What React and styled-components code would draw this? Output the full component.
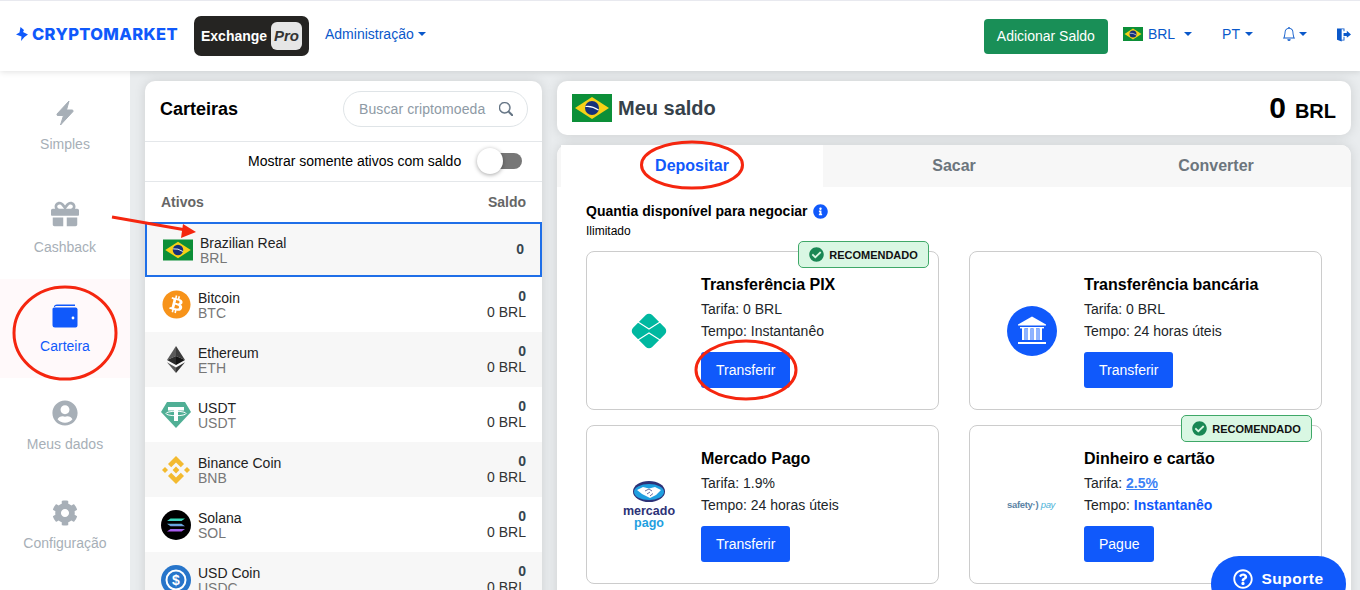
import React from "react";
import styled, { createGlobalStyle } from "styled-components";
import { FaGift, FaUserCircle, FaCog, FaBitcoin, FaCheckCircle, FaInfoCircle, FaRegQuestionCircle } from "react-icons/fa";
import { BsBell, BsSearch } from "react-icons/bs";

const BLUE = "#1059fb";
const LINK = "#0a58ca";

const Global = createGlobalStyle`
  html, body { margin: 0; padding: 0; background: #e9ecee; }
  body { font-family: "Liberation Sans", Arial, sans-serif; font-size: 14px; color: #212529; }
  * { box-sizing: border-box; }
`;

const Page = styled.div`
  position: relative;
  width: 1360px;
  height: 590px;
  overflow: hidden;
  display: flex;
  flex-direction: column;
  background: #e9ecee;
`;

const Header = styled.header`
  position: relative;
  z-index: 2;
  flex: 0 0 71px;
  display: flex;
  align-items: center;
  padding: 0 9px 0 16px;
  background: #fff;
  border-top: 1px solid #e8e9ef;
  box-shadow: 0 1px 6px rgba(0, 0, 0, 0.12);
`;

const Logo = styled.div`
  display: flex;
  align-items: center;
  gap: 4px;
  width: 178px;
  margin-top: -4px;
  color: ${BLUE};
  font-family: Inter, sans-serif;
  font-weight: 800;
  font-size: 16.5px;
  letter-spacing: 0.35px;
`;

const ExchangeBadge = styled.div`
  width: 115px;
  height: 40px;
  margin-top: -1px;
  padding: 0 7px;
  display: flex;
  align-items: center;
  justify-content: space-between;
  background: #252422;
  border-radius: 7px;
  color: #fff;
  font-weight: 700;
  font-size: 14px;
`;

const ProTag = styled.span`
  width: 31px;
  height: 28px;
  display: flex;
  align-items: center;
  justify-content: center;
  background: #e6e6e6;
  border-radius: 6px;
  color: #333;
  font-style: italic;
  font-size: 15px;
`;

const Caret = styled.i`
  display: inline-block;
  width: 0;
  height: 0;
  margin-left: ${(p) => p.$gap ?? 4}px;
  border-top: 4px solid ${LINK};
  border-left: 4px solid transparent;
  border-right: 4px solid transparent;
  vertical-align: 2px;
`;

const NavLink = styled.div`
  display: flex;
  align-items: center;
  margin-left: ${(p) => p.$left}px;
  margin-top: -4px;
  color: ${LINK};
  font-size: 14px;
`;

const FlagLabel = styled.span`
  margin-left: 5px;
`;

const AddButton = styled.div`
  margin-left: auto;
  width: 124px;
  height: 35px;
  display: flex;
  align-items: center;
  justify-content: center;
  background: #198f57;
  border-radius: 4px;
  color: #fff;
  font-size: 14px;
`;

const Body = styled.div`
  flex: 1;
  display: flex;
  min-height: 0;
`;

const Sidebar = styled.nav`
  flex: 0 0 130px;
  padding-top: 8px;
  background: #fff;
`;

const SideItem = styled.div`
  height: ${(p) => p.$h ?? 99}px;
  padding-top: ${(p) => p.$top ?? 23}px;
  display: flex;
  flex-direction: column;
  align-items: center;
  background: ${(p) => (p.$active ? "#fff9fa" : "transparent")};
  color: ${(p) => (p.$active ? BLUE : "#a7afb7")};
  font-size: 14px;
`;

const SideIcon = styled.div`
  height: 28px;
  display: flex;
  align-items: center;
  justify-content: center;
  margin-bottom: ${(p) => p.$gap ?? 9}px;
`;

const Content = styled.main`
  flex: 1;
  display: flex;
  gap: 15px;
  padding: 10px 9px 0 15px;
  min-width: 0;
`;

const Wallet = styled.section`
  flex: 0 0 397px;
  height: 560px;
  background: #fff;
  border-radius: 10px 10px 0 0;
  box-shadow: 0 0 12px rgba(0, 0, 0, 0.12);
`;

const WalletHead = styled.div`
  height: 60px;
  padding: 0 14px 4px 15px;
  display: flex;
  align-items: center;
  justify-content: space-between;
`;

const WalletTitle = styled.h2`
  margin: 0;
  font-size: 18px;
  font-weight: 700;
  color: #000;
`;

const Search = styled.div`
  width: 185px;
  height: 36px;
  padding: 0 14px 0 15px;
  display: flex;
  align-items: center;
  justify-content: space-between;
  border: 1px solid #dfe4e7;
  border-radius: 18px;
  color: #8e9aa5;
  font-size: 14px;
  letter-spacing: 0.1px;
  svg { color: #5f7080; stroke: currentColor; stroke-width: 0.6; }
`;

const FilterRow = styled.div`
  height: 41px;
  padding: 0 0 2px 103px;
  display: flex;
  align-items: center;
  border-top: 1px solid #e4e7ea;
  border-bottom: 1px solid #e4e7ea;
  color: #000;
  font-size: 14px;
`;

const ToggleTrack = styled.div`
  position: relative;
  width: 38px;
  height: 16px;
  margin-left: 23px;
  background: #777;
  border-radius: 8px;
`;

const ToggleKnob = styled.div`
  position: absolute;
  left: -7px;
  top: -5px;
  width: 26px;
  height: 26px;
  background: #fff;
  border-radius: 50%;
  box-shadow: 0 1px 4px rgba(0, 0, 0, 0.35);
`;

const ColumnHead = styled.div`
  height: 40px;
  padding: 0 16px;
  display: flex;
  align-items: center;
  justify-content: space-between;
  color: #666;
  font-size: 14px;
  font-weight: 700;
`;

const AssetRow = styled.div`
  height: 55px;
  padding: 0 16px;
  display: flex;
  align-items: center;
  background: ${(p) => (p.$shade ? "#f7f7f7" : "#fff")};
  border: ${(p) => (p.$selected ? "2px solid #1f6fe8" : "none")};
`;

const AssetIcon = styled.div`
  flex: 0 0 30px;
  height: 30px;
  display: flex;
  align-items: center;
  justify-content: center;
`;

const AssetName = styled.div`
  flex: 1;
  margin-left: 7px;
  padding-top: 2px;
  line-height: 15px;
  color: #222;
  font-size: 14px;
  span { display: block; color: #777; }
`;

const AssetValue = styled.div`
  padding-bottom: 2px;
  text-align: right;
  line-height: 16px;
  color: #333;
  font-size: 14px;
  b { display: block; color: #36454f; }
`;

const RightColumn = styled.div`
  flex: 0 0 794px;
  display: flex;
  flex-direction: column;
  gap: 10px;
`;

const BalanceCard = styled.div`
  flex: none;
  height: 54px;
  padding: 0 15px;
  display: flex;
  align-items: center;
  background: #fff;
  border-radius: 10px;
  box-shadow: 0 0 12px rgba(0, 0, 0, 0.12);
`;

const BalanceTitle = styled.h1`
  margin: 0 0 0 6px;
  flex: 1;
  color: #36414a;
  font-size: 20px;
  font-weight: 700;
`;

const BalanceAmount = styled.div`
  color: #000;
  font-size: 20px;
  font-weight: 700;
  b { font-size: 30px; margin-right: 9px; }
`;

const DepositCard = styled.div`
  flex: none;
  height: 470px;
  background: #fff;
  border-radius: 10px 10px 0 0;
  box-shadow: 0 0 12px rgba(0, 0, 0, 0.12);
`;

const Tabs = styled.div`
  height: 42px;
  padding: 0 4px;
  display: flex;
  background: #f7f7f7;
  border-radius: 10px 10px 0 0;
`;

const Tab = styled.div`
  flex: 1;
  display: flex;
  align-items: center;
  justify-content: center;
  background: ${(p) => (p.$active ? "#fff" : "transparent")};
  color: ${(p) => (p.$active ? BLUE : "#6c757d")};
  font-size: 16px;
  font-weight: 700;
`;

const DepositBody = styled.div`
  padding: 16px 29px 0;
`;

const Available = styled.div`
  display: flex;
  align-items: center;
  gap: 5px;
  color: #000;
  font-size: 14px;
  font-weight: 700;
  letter-spacing: 0.02px;
`;

const Unlimited = styled.div`
  margin-top: 5px;
  color: #000;
  font-size: 12px;
  line-height: 14px;
`;

const MethodGrid = styled.div`
  margin-top: 13px;
  display: grid;
  grid-template-columns: 1fr 1fr;
  column-gap: 30px;
  row-gap: 15px;
`;

const MethodCard = styled.article`
  position: relative;
  height: 159px;
  display: flex;
  align-items: center;
  border: 1px solid #ccc;
  border-radius: 8px;
`;

const MethodLogo = styled.div`
  flex: 0 0 114px;
  display: flex;
  align-items: center;
  justify-content: center;
  padding-left: 10px;
`;

const MethodInfo = styled.div`
  padding-top: 2px;
  color: #212529;
  font-size: 14px;
`;

const MethodTitle = styled.h3`
  margin: 0 0 4px;
  color: #000;
  font-size: 16px;
  line-height: 18px;
  font-weight: 700;
`;

const MethodLine = styled.div`
  height: 22px;
  line-height: 22px;
  a { color: #3b82f6; font-weight: 700; text-decoration: underline; }
  strong { color: ${BLUE}; }
`;

const ActionButton = styled.div`
  display: inline-flex;
  align-items: center;
  justify-content: center;
  margin-top: 10px;
  height: 36px;
  padding: 0 15px;
  background: ${BLUE};
  border-radius: 3px;
  color: #fff;
  font-size: 14px;
`;

const Recommended = styled.div`
  position: absolute;
  top: -11px;
  right: 9px;
  width: 131px;
  height: 27px;
  display: flex;
  align-items: center;
  justify-content: center;
  gap: 5px;
  background: #d9f7e3;
  border: 1px solid #3fa868;
  border-radius: 5px;
  color: #111;
  font-size: 11px;
  font-weight: 700;
  svg { color: #198754; }
`;

const SupportButton = styled.div`
  position: absolute;
  left: 1211px;
  top: 556px;
  width: 135px;
  height: 56px;
  padding-bottom: 11px;
  display: flex;
  align-items: center;
  justify-content: center;
  gap: 8px;
  background: ${BLUE};
  border-radius: 28px;
  color: #fff;
  font-size: 15.5px;
  font-weight: 700;
  letter-spacing: 0.5px;
  z-index: 4;
`;

const Annotations = styled.svg`
  position: absolute;
  left: 0;
  top: 0;
  z-index: 5;
  pointer-events: none;
`;

const Flag = ({ w, h }) => (
  <svg width={w} height={h} viewBox="0 0 40 28">
    <rect width="40" height="28" fill="#0c8f38" />
    <polygon points="20,3 37,14 20,25 3,14" fill="#f7d117" />
    <circle cx="20" cy="14" r="7" fill="#17307a" />
    <path d="M13.5 12.5 Q20 11.5 26.5 16" stroke="#fff" strokeWidth="1.2" fill="none" />
  </svg>
);

const BoltIcon = () => (
  <svg width="20" height="26" viewBox="0 0 20 26" fill="#a7afb7">
    <path d="M14 1 L2 14 Q1.5 15.5 3 15.5 L8.5 15.5 L5.5 25 L18 11.5 Q18.5 10 17 10 L11.5 10 Z" stroke="#a7afb7" strokeLinejoin="round" />
  </svg>
);

const WalletIcon = () => (
  <svg width="26" height="24" viewBox="0 0 26 24">
    <path d="M2 3 Q2 0.5 5 0.5 L23 0.5 L23 2 L4 2 Q3 2 3 3 Z" fill={BLUE} />
    <path d="M0.5 5 Q0.5 3.5 2 3.5 L23.5 3.5 Q25.5 3.5 25.5 5.5 L25.5 21.5 Q25.5 23.5 23.5 23.5 L3 23.5 Q0.5 23.5 0.5 21 Z" fill={BLUE} />
    <circle cx="21" cy="14" r="1.4" fill="#fff" />
  </svg>
);

const LogoMark = () => (
  <svg width="12" height="14" viewBox="0 0 12 14" fill={BLUE}>
    <path d="M4.5 0 L8 3 L7 5 L12 7.5 L8.5 10 L5 14 L5.5 9.5 L0 7.5 L3.5 5.5 Z" />
  </svg>
);

const DoorIcon = () => (
  <svg width="14" height="15" viewBox="0 0 15 15" fill={LINK}>
    <path d="M0 1 L8 1 L8 4 L7 4 L7 2 L5 2 L5 13 L7 13 L7 10 L8 10 L8 14 L5 14 L5 15 L0 13 Z" />
    <path d="M7 6 L10.5 6 L10.5 3.5 L15 7.5 L10.5 11 L10.5 9 L7 9 Z" />
  </svg>
);

const EthIcon = () => (
  <svg width="18" height="29" viewBox="0 0 20 30">
    <polygon points="10,0 0,15.5 10,11" fill="#5a5a5a" />
    <polygon points="10,0 20,15.5 10,11" fill="#3c3c3c" />
    <polygon points="0,15.5 10,11 10,21" fill="#2b2b2b" />
    <polygon points="20,15.5 10,11 10,21" fill="#141414" />
    <polygon points="0,18 10,30 10,24" fill="#5a5a5a" />
    <polygon points="20,18 10,30 10,24" fill="#333" />
  </svg>
);

const TetherIcon = () => (
  <svg width="30" height="26" viewBox="0 0 30 26">
    <polygon points="6,0 24,0 30,10 15,26 0,10" fill="#50af95" />
    <path d="M7 5 H23 V8.5 H17 V19 H13 V8.5 H7 Z" fill="#fff" />
    <ellipse cx="15" cy="11.5" rx="10" ry="2.2" fill="none" stroke="#fff" strokeWidth="1" />
  </svg>
);

const BnbIcon = () => (
  <svg width="28" height="28" viewBox="0 0 28 28" fill="#f3ba2f">
    <path d="M14 0 L22 8 L18.8 11.2 L14 6.4 L9.2 11.2 L6 8 Z" />
    <path d="M14 28 L22 20 L18.8 16.8 L14 21.6 L9.2 16.8 L6 20 Z" />
    <polygon points="3,11 6,14 3,17 0,14" />
    <polygon points="25,11 28,14 25,17 22,14" />
    <polygon points="14,10.6 17.4,14 14,17.4 10.6,14" />
  </svg>
);

const SolanaIcon = () => (
  <svg width="30" height="30" viewBox="0 0 30 30">
    <defs>
      <linearGradient id="sol" x1="0" y1="0" x2="0" y2="1">
        <stop offset="0" stopColor="#2fe0b4" />
        <stop offset="0.5" stopColor="#6aa6e0" />
        <stop offset="1" stopColor="#b14ff0" />
      </linearGradient>
    </defs>
    <circle cx="15" cy="15" r="15" fill="#000" />
    <path d="M9.5 8.5 H24 L20.5 11 H6 Z M6 13.7 H20.5 L24 16.2 H9.5 Z M9.5 19 H24 L20.5 21.5 H6 Z" fill="url(#sol)" />
  </svg>
);

const UsdcIcon = () => (
  <svg width="30" height="30" viewBox="0 0 30 30">
    <circle cx="15" cy="15" r="15" fill="#2775ca" />
    <circle cx="15" cy="15" r="9.5" fill="none" stroke="#fff" strokeWidth="2" />
    <text x="15" y="20" textAnchor="middle" fill="#fff" fontSize="14" fontWeight="700" fontFamily="Liberation Sans">$</text>
  </svg>
);

const PixIcon = () => (
  <svg width="38" height="38" viewBox="0 0 38 38">
    <rect x="5.5" y="5.5" width="27" height="27" rx="4.5" transform="rotate(45 19 19)" fill="#00b8a0" />
    <path d="M8 10 L19 17 L30 10 M8 28 L19 21 L30 28" fill="none" stroke="#fff" strokeWidth="1.1" />
  </svg>
);

const BankIcon = () => (
  <svg width="50" height="50" viewBox="0 0 50 50">
    <circle cx="25" cy="25" r="25" fill={BLUE} />
    <polygon points="11,18.5 25,10.5 39,18.5 39,19.5 11,19.5" fill="#fff" />
    <rect x="13" y="21" width="24" height="1.4" fill="#fff" />
    <path d="M15 22 H17.5 V34 H15 Z M21 22 H23.5 V34 H21 Z M26.5 22 H29 V34 H26.5 Z M32.5 22 H35 V34 H32.5 Z" fill="#fff" />
    <path d="M17.5 22.5 H21 V34 H17.5 Z M23.5 22.5 H26.5 V34 H23.5 Z M29 22.5 H32.5 V34 H29 Z" fill="#8fb4ff" />
    <rect x="11" y="36" width="28" height="2" fill="#fff" />
  </svg>
);

const MercadoLogo = styled.div`
  display: flex;
  flex-direction: column;
  align-items: center;
  font-weight: 700;
  font-size: 12.5px;
  line-height: 12px;
  color: #2d3277;
  span { color: #1f9fe0; }
  svg { margin-bottom: 3px; }
`;

const SafetyPay = styled.div`
  margin-left: -2px;
  color: #5b84a5;
  font-size: 9.5px;
  font-weight: 700;
  letter-spacing: -0.3px;
  white-space: nowrap;
  em { color: #4db3d8; font-weight: 400; }
`;

const ASSETS = [
  { name: "Bitcoin", code: "BTC", icon: <FaBitcoin size={29} color="#f7931a" /> },
  { name: "Ethereum", code: "ETH", icon: <EthIcon />, shade: true },
  { name: "USDT", code: "USDT", icon: <TetherIcon /> },
  { name: "Binance Coin", code: "BNB", icon: <BnbIcon />, shade: true },
  { name: "Solana", code: "SOL", icon: <SolanaIcon /> },
  { name: "USD Coin", code: "USDC", icon: <UsdcIcon />, shade: true },
];

const Badge = () => (
  <Recommended>
    <FaCheckCircle size={15} />
    RECOMENDADO
  </Recommended>
);

export default function App() {
  return (
    <Page>
      <Global />
      <Header>
        <Logo>
          <LogoMark />
          CRYPTOMARKET
        </Logo>
        <ExchangeBadge>
          Exchange
          <ProTag>Pro</ProTag>
        </ExchangeBadge>
        <NavLink $left={16}>
          Administração
          <Caret />
        </NavLink>
        <AddButton>Adicionar Saldo</AddButton>
        <NavLink $left={15}>
          <Flag w={20} h={14} />
          <FlagLabel>BRL</FlagLabel>
          <Caret $gap={9} />
        </NavLink>
        <NavLink $left={30}>
          PT
          <Caret $gap={5} />
        </NavLink>
        <NavLink $left={29}>
          <BsBell size={14} />
          <Caret $gap={3} />
        </NavLink>
        <NavLink $left={30}>
          <DoorIcon />
        </NavLink>
      </Header>
      <Body>
        <Sidebar>
          <SideItem $h={101} $top={20}>
            <SideIcon><BoltIcon /></SideIcon>
            Simples
          </SideItem>
          <SideItem $top={20}>
            <SideIcon $gap={11}><FaGift size={28} /></SideIcon>
            Cashback
          </SideItem>
          <SideItem $active>
            <SideIcon $gap={8}><WalletIcon /></SideIcon>
            Carteira
          </SideItem>
          <SideItem $top={21}>
            <SideIcon><FaUserCircle size={26} /></SideIcon>
            Meus dados
          </SideItem>
          <SideItem $top={22}>
            <SideIcon $gap={8}><FaCog size={26} /></SideIcon>
            Configuração
          </SideItem>
        </Sidebar>
        <Content>
          <Wallet>
            <WalletHead>
              <WalletTitle>Carteiras</WalletTitle>
              <Search>
                Buscar criptomoeda
                <BsSearch size={14} />
              </Search>
            </WalletHead>
            <FilterRow>
              Mostrar somente ativos com saldo
              <ToggleTrack><ToggleKnob /></ToggleTrack>
            </FilterRow>
            <ColumnHead>
              <span>Ativos</span>
              <span>Saldo</span>
            </ColumnHead>
            <AssetRow $selected $shade>
              <AssetIcon><Flag w={30} h={22} /></AssetIcon>
              <AssetName>
                Brazilian Real
                <span>BRL</span>
              </AssetName>
              <AssetValue><b>0</b></AssetValue>
            </AssetRow>
            {ASSETS.map((a) => (
              <AssetRow key={a.code} $shade={a.shade}>
                <AssetIcon>{a.icon}</AssetIcon>
                <AssetName>
                  {a.name}
                  <span>{a.code}</span>
                </AssetName>
                <AssetValue>
                  <b>0</b>
                  0 BRL
                </AssetValue>
              </AssetRow>
            ))}
          </Wallet>
          <RightColumn>
            <BalanceCard>
              <Flag w={40} h={28} />
              <BalanceTitle>Meu saldo</BalanceTitle>
              <BalanceAmount><b>0</b>BRL</BalanceAmount>
            </BalanceCard>
            <DepositCard>
              <Tabs>
                <Tab $active>Depositar</Tab>
                <Tab>Sacar</Tab>
                <Tab>Converter</Tab>
              </Tabs>
              <DepositBody>
                <Available>
                  Quantia disponível para negociar
                  <FaInfoCircle size={15} color={BLUE} />
                </Available>
                <Unlimited>Ilimitado</Unlimited>
                <MethodGrid>
                  <MethodCard>
                    <Badge />
                    <MethodLogo><PixIcon /></MethodLogo>
                    <MethodInfo>
                      <MethodTitle>Transferência PIX</MethodTitle>
                      <MethodLine>Tarifa: 0 BRL</MethodLine>
                      <MethodLine>Tempo: Instantanêo</MethodLine>
                      <ActionButton>Transferir</ActionButton>
                    </MethodInfo>
                  </MethodCard>
                  <MethodCard>
                    <MethodLogo><BankIcon /></MethodLogo>
                    <MethodInfo>
                      <MethodTitle>Transferência bancária</MethodTitle>
                      <MethodLine>Tarifa: 0 BRL</MethodLine>
                      <MethodLine>Tempo: 24 horas úteis</MethodLine>
                      <ActionButton>Transferir</ActionButton>
                    </MethodInfo>
                  </MethodCard>
                  <MethodCard>
                    <MethodLogo>
                      <MercadoLogo>
                        <svg width="32" height="21" viewBox="0 0 32 21">
                          <ellipse cx="16" cy="10.5" rx="16" ry="10.5" fill="#2d3277" />
                          <ellipse cx="16" cy="11" rx="15" ry="8" fill="#1f9fe0" />
                          <path d="M4 9 L10 6 L16 7.5 L22 6 L28 9 L23 14 L17 17 L15 16 L9 13 Z" fill="#fff" />
                          <path d="M12 10 L16 8 L19 10 M14 13 L17 11 M17 15 L20 12.5" stroke="#2d3277" strokeWidth="0.7" fill="none" />
                        </svg>
                        mercado
                        <span>pago</span>
                      </MercadoLogo>
                    </MethodLogo>
                    <MethodInfo>
                      <MethodTitle>Mercado Pago</MethodTitle>
                      <MethodLine>Tarifa: 1.9%</MethodLine>
                      <MethodLine>Tempo: 24 horas úteis</MethodLine>
                      <ActionButton>Transferir</ActionButton>
                    </MethodInfo>
                  </MethodCard>
                  <MethodCard>
                    <Badge />
                    <MethodLogo>
                      <SafetyPay>safety·)<em> pay</em></SafetyPay>
                    </MethodLogo>
                    <MethodInfo>
                      <MethodTitle>Dinheiro e cartão</MethodTitle>
                      <MethodLine>Tarifa: <a>2.5%</a></MethodLine>
                      <MethodLine>Tempo: <strong>Instantanêo</strong></MethodLine>
                      <ActionButton>Pague</ActionButton>
                    </MethodInfo>
                  </MethodCard>
                </MethodGrid>
              </DepositBody>
            </DepositCard>
          </RightColumn>
        </Content>
      </Body>
      <SupportButton>
        <FaRegQuestionCircle size={20} />
        Suporte
      </SupportButton>
      <Annotations width="1360" height="590" viewBox="0 0 1360 590" fill="none" stroke="#f5260f" strokeWidth="3">
        <ellipse cx="65" cy="333" rx="51" ry="46" />
        <ellipse cx="692" cy="165" rx="50.5" ry="23" />
        <ellipse cx="746" cy="370" rx="50" ry="29" />
        <line x1="112" y1="217" x2="186" y2="230" />
        <polygon points="196,232 181,238 183,224" fill="#f5260f" stroke="none" />
      </Annotations>
    </Page>
  );
}
